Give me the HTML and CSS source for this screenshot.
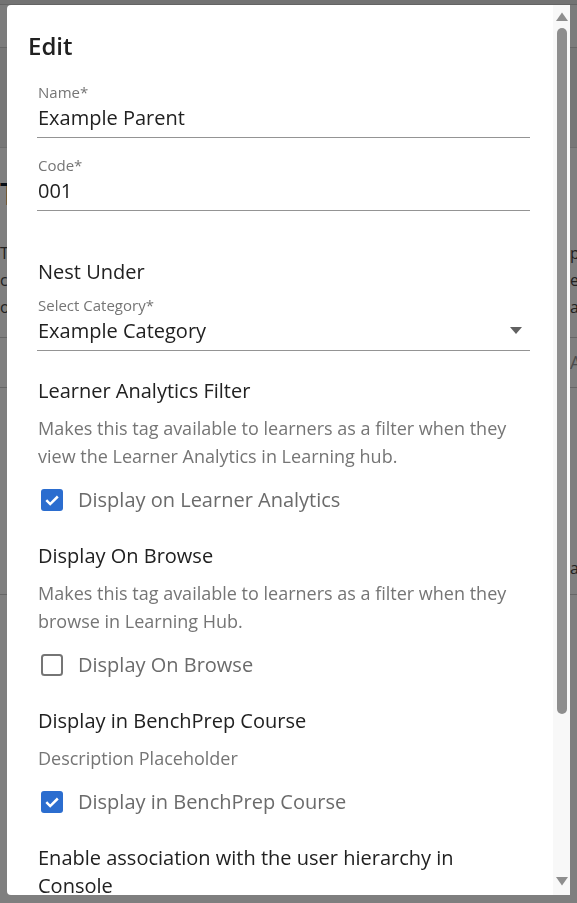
FILE: index.html
```html
<!DOCTYPE html>
<html lang="en">
<head>
<meta charset="utf-8">
<title>Edit</title>
<link rel="stylesheet" href="styles.css">
</head>
<body>
<div class="page" aria-hidden="true">
  <div class="page-top"></div>
  <div class="page-sub"></div>
  <div class="page-title"><span class="pl">T</span><span class="gap"></span><span class="pr"></span></div>
  <div class="page-text">
    <div class="page-row"><span class="pl">T</span><span class="gap"></span><span class="pr">pe</span></div>
    <div class="page-row"><span class="pl">c</span><span class="gap"></span><span class="pr">ec</span></div>
    <div class="page-row"><span class="pl">o</span><span class="gap"></span><span class="pr">a</span></div>
  </div>
  <div class="page-line"><span class="pl"></span><span class="gap"></span><span class="pr muted">A</span></div>
  <div class="page-block"><span class="pl"></span><span class="gap"></span><span class="pr">a</span></div>
  <div class="page-foot"></div>
</div>
<div class="overlay"></div>

<div class="dialog" role="dialog" aria-label="Edit">
  <div class="dialog-body">
    <h2 class="title">Edit</h2>
    <div class="form">
      <div class="field">
        <div class="field-label">Name*</div>
        <div class="field-value">Example Parent</div>
      </div>
      <div class="field">
        <div class="field-label">Code*</div>
        <div class="field-value">001</div>
      </div>

      <div class="heading nest">Nest Under</div>
      <div class="field select">
        <div class="field-label">Select Category*</div>
        <div class="field-value select-value">
          <span>Example Category</span>
          <svg class="caret" width="12" height="7" viewBox="0 0 12 7"><path d="M0 0H12L6 7Z" fill="#616161"/></svg>
        </div>
      </div>

      <div class="section first">
        <div class="heading">Learner Analytics Filter</div>
        <div class="desc">Makes this tag available to learners as a filter when they view the Learner Analytics in Learning hub.</div>
        <div class="check-row">
          <svg class="box" width="22" height="22" viewBox="0 0 22 22"><rect width="22" height="22" rx="3" fill="#2b6dcf"/><path d="M5.3 11.2l3.9 3.9 7.6-7.6" fill="none" stroke="#fff" stroke-width="2.5"/></svg>
          <span class="check-label">Display on Learner Analytics</span>
        </div>
      </div>

      <div class="section">
        <div class="heading">Display On Browse</div>
        <div class="desc">Makes this tag available to learners as a filter when they browse in Learning Hub.</div>
        <div class="check-row">
          <svg class="box" width="22" height="22" viewBox="0 0 22 22"><rect x="1" y="1" width="20" height="20" rx="2.5" fill="#fff" stroke="#757575" stroke-width="2"/></svg>
          <span class="check-label">Display On Browse</span>
        </div>
      </div>

      <div class="section">
        <div class="heading">Display in BenchPrep Course</div>
        <div class="desc">Description Placeholder</div>
        <div class="check-row">
          <svg class="box" width="22" height="22" viewBox="0 0 22 22"><rect width="22" height="22" rx="3" fill="#2b6dcf"/><path d="M5.3 11.2l3.9 3.9 7.6-7.6" fill="none" stroke="#fff" stroke-width="2.5"/></svg>
          <span class="check-label">Display in BenchPrep Course</span>
        </div>
      </div>

      <div class="section">
        <div class="heading">Enable association with the user hierarchy in Console</div>
      </div>
    </div>
  </div>
  <div class="scrollbar">
    <div class="sb-btn up"><svg width="12" height="9" viewBox="0 0 12 9"><path d="M6 0.5L12 9H0Z" fill="#8e8e8e"/></svg></div>
    <div class="sb-track"><div class="sb-thumb"></div></div>
    <div class="sb-btn down"><svg width="12" height="9" viewBox="0 0 12 9"><path d="M0 0H12L6 8.5Z" fill="#8e8e8e"/></svg></div>
  </div>
</div>
</body>
</html>
```

FILE: styles.css
```css
html, body {
  margin: 0;
  height: 100%;
  overflow: hidden;
}
body {
  font-family: "Open Sans", "Noto Sans", sans-serif;
  background: #fff;
  color: #212121;
}

/* underlying page (dimmed behind the dialog) */
.page {
  height: 903px;
  background: #fff;
}
.page-top {
  height: 5px;
  background: #e6e6e6;
  border-bottom: 42px solid #f8f8f8;
  box-shadow: inset 0 -1px 0 #c8c8c8;
}
.page-sub {
  height: 99px;
  background: #efefef;
  border-top: 1px solid #cfcfcf;
  border-bottom: 1px solid #dcdcdc;
}
.page-title,
.page-row,
.page-line,
.page-block {
  display: flex;
  white-space: nowrap;
}
.pl {
  width: 7px;
  overflow: hidden;
  flex: none;
}
.gap {
  width: 563px;
  flex: none;
}
.pr {
  flex: 1;
  overflow: hidden;
}
.page-title {
  margin-top: 26px;
  font-size: 30px;
  line-height: 40px;
  font-weight: 600;
  color: #0d1a2a;
}
.page-text {
  margin-top: 26px;
  border-bottom: 1px solid #ccc;
  padding-bottom: 16px;
}
.page-row {
  font-size: 16px;
  line-height: 27px;
  color: #444;
}
.page-line {
  height: 49px;
  border-bottom: 1px solid #ccc;
  font-size: 18px;
  line-height: 48px;
  color: #999;
}
.page-block {
  height: 206px;
  border-bottom: 1px solid #ccc;
  font-size: 16px;
  line-height: 360px;
  color: #444;
}
.page-foot { height: 200px; }

.overlay {
  position: fixed;
  inset: 0;
  background: rgba(0, 0, 0, 0.5);
}

/* dialog */
.dialog {
  position: fixed;
  top: 5px;
  left: 7px;
  width: 563px;
  height: 890px;
  background: #fff;
  border-radius: 4px 0 0 4px;
  display: flex;
  overflow: hidden;
}
.dialog-body {
  flex: 1;
  overflow: hidden;
  padding: 26px 0 0 21px;
}
.title {
  margin: 0;
  font-size: 24px;
  line-height: 30px;
  font-weight: 600;
  color: #212121;
}
.form {
  margin: 21px 0 0 9px;
  width: 493px;
}
.field {
  border-bottom: 1px solid #949494;
  padding: 0 0 6px 1px;
}
.field + .field { margin-top: 17px; }
.field-label {
  font-size: 15px;
  line-height: 20px;
  color: #757575;
}
.field-value {
  margin-top: 3px;
  font-size: 20px;
  line-height: 26px;
  color: #212121;
}
.select-value {
  display: flex;
  align-items: center;
  justify-content: space-between;
  padding-right: 8px;
}
.caret { margin-top: -2px; }

.heading {
  font-size: 20px;
  line-height: 28px;
  color: #212121;
  padding-left: 1px;
}
.heading.nest { margin-top: 47px; }
.field.select { margin-top: 9px; }

.section { margin-top: 22px; }
.section.first { margin-top: 26px; }
.desc {
  margin-top: 9px;
  font-size: 18px;
  line-height: 28px;
  color: #757575;
  padding-left: 1px;
}
.check-row {
  display: flex;
  align-items: center;
  gap: 15px;
  height: 40px;
  margin-top: 10px;
  padding-left: 4px;
}
.box { flex: none; }
.check-label {
  font-size: 20px;
  line-height: 28px;
  color: #6b6b6b;
}

/* scrollbar */
.scrollbar {
  width: 17px;
  flex: none;
  background: #f8f8f8;
  display: flex;
  flex-direction: column;
  align-items: center;
}
.sb-btn {
  display: flex;
  justify-content: center;
}
.sb-btn.up {
  height: 23px;
  align-items: center;
}
.sb-track {
  flex: 1;
  width: 100%;
  display: flex;
  justify-content: center;
}
.sb-thumb {
  width: 10px;
  height: 686px;
  border-radius: 5px;
  background: #8e8e8e;
}
.sb-btn.down {
  height: 13px;
  align-items: flex-start;
  margin-bottom: 5px;
}
```
